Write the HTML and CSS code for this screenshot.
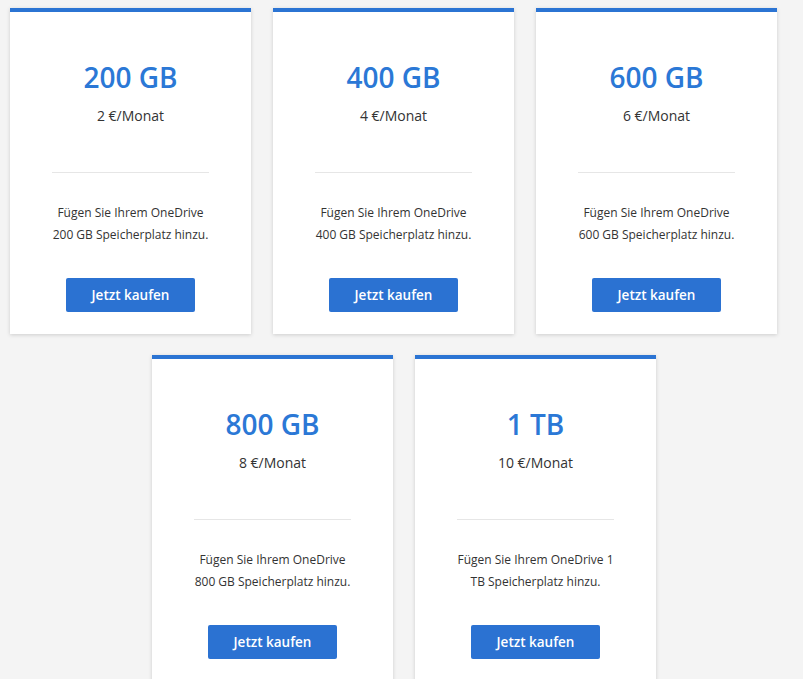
FILE: index.html
```html
<!DOCTYPE html>
<html lang="de">
<head>
<meta charset="utf-8">
<title>OneDrive Speicher</title>
<link rel="stylesheet" href="styles.css">
</head>
<body>
<div class="plans">
  <div class="row row-top">
    <div class="card">
      <div class="size">200 GB</div>
      <div class="price">2 €/Monat</div>
      <hr class="divider">
      <p class="desc">Fügen Sie Ihrem OneDrive<br>200 GB Speicherplatz hinzu.</p>
      <button class="buy">Jetzt kaufen</button>
    </div>
    <div class="card">
      <div class="size">400 GB</div>
      <div class="price">4 €/Monat</div>
      <hr class="divider">
      <p class="desc">Fügen Sie Ihrem OneDrive<br>400 GB Speicherplatz hinzu.</p>
      <button class="buy">Jetzt kaufen</button>
    </div>
    <div class="card">
      <div class="size">600 GB</div>
      <div class="price">6 €/Monat</div>
      <hr class="divider">
      <p class="desc">Fügen Sie Ihrem OneDrive<br>600 GB Speicherplatz hinzu.</p>
      <button class="buy">Jetzt kaufen</button>
    </div>
  </div>
  <div class="row row-bottom">
    <div class="card">
      <div class="size">800 GB</div>
      <div class="price">8 €/Monat</div>
      <hr class="divider">
      <p class="desc">Fügen Sie Ihrem OneDrive<br>800 GB Speicherplatz hinzu.</p>
      <button class="buy">Jetzt kaufen</button>
    </div>
    <div class="card">
      <div class="size">1 TB</div>
      <div class="price">10 €/Monat</div>
      <hr class="divider">
      <p class="desc">Fügen Sie Ihrem OneDrive 1<br>TB Speicherplatz hinzu.</p>
      <button class="buy">Jetzt kaufen</button>
    </div>
  </div>
</div>
</body>
</html>
```
FILE: styles.css
```css
* { box-sizing: border-box; }
html, body {
  margin: 0;
  padding: 0;
  background: #f4f4f4;
  font-family: "Open Sans", "Noto Sans", "Liberation Sans", sans-serif;
  color: #333;
}
.plans {
  padding-top: 8px;
  display: flex;
  flex-direction: column;
  gap: 21px;
}
.row {
  display: flex;
  gap: 22px;
}
.row-top { padding-left: 10px; }
.row-bottom { padding-left: 152px; }
.card {
  width: 241px;
  height: 326px;
  background: #fff;
  border-top: 4px solid #2b74d3;
  box-shadow: 0 1px 4px rgba(0,0,0,0.16);
  display: flex;
  flex-direction: column;
  align-items: center;
  padding-top: 47px;
}
.size {
  font-size: 28px;
  line-height: 36px;
  color: #2b78d6;
  font-weight: 600;
}
.price {
  margin-top: 11px;
  font-size: 14px;
  line-height: 20px;
  color: #333;
}
.divider {
  margin: 46px 0 0;
  width: 157px;
  height: 1px;
  border: 0;
  background: #e6e6e6;
}
.desc {
  margin: 29px 0 0;
  font-size: 12px;
  line-height: 22px;
  text-align: center;
  color: #333;
}
.buy {
  margin-top: 32px;
  width: 129px;
  height: 34px;
  border: 0;
  border-radius: 2px;
  background: #2b72d2;
  color: #fff;
  font-family: inherit;
  font-size: 13.5px;
  font-weight: 600;
  cursor: pointer;
}
```
